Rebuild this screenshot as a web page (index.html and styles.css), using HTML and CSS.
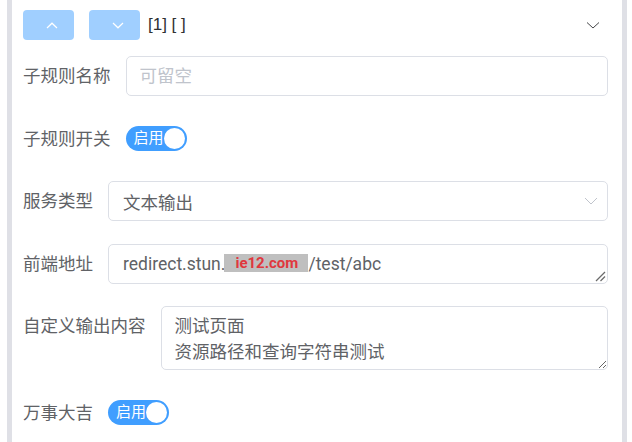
FILE: index.html
```html
<!DOCTYPE html>
<html lang="zh-CN">
<head>
<meta charset="utf-8">
<title>子规则</title>
<link rel="stylesheet" href="styles.css">
</head>
<body>
<div class="panel">
  <div class="header">
    <button class="btn btn-up" type="button">
      <svg width="12" height="7" viewBox="0 0 12 7"><polyline points="1,6 6,1.2 11,6" fill="none" stroke="#fff" stroke-width="1.2"/></svg>
    </button>
    <button class="btn btn-down" type="button">
      <svg width="12" height="7" viewBox="0 0 12 7"><polyline points="1,1 6,5.8 11,1" fill="none" stroke="#fff" stroke-width="1.2"/></svg>
    </button>
    <span class="idx">[1] [ ]</span>
    <svg class="collapse" width="14" height="8" viewBox="0 0 14 8"><polyline points="1,1.5 7,7 13,1.5" fill="none" stroke="#303133" stroke-width="0.9"/></svg>
  </div>
  <div class="form">
    <div class="item">
      <label class="lbl">子规则名称</label>
      <input class="input" type="text" placeholder="可留空">
    </div>
    <div class="item">
      <label class="lbl">子规则开关</label>
      <div class="sw-row"><span class="switch"><span class="sw-text">启用</span><span class="knob"></span></span></div>
    </div>
    <div class="item">
      <label class="lbl">服务类型</label>
      <div class="select"><span class="sel-text">文本输出</span>
        <svg class="sel-arrow" width="14" height="8" viewBox="0 0 14 8"><polyline points="1,1 7,7 13,1" fill="none" stroke="#c0c4cc" stroke-width="1"/></svg>
      </div>
    </div>
    <div class="item">
      <label class="lbl">前端地址</label>
      <div class="area area-one"><span class="url">redirect.stun.</span><span class="mask">ie12.com</span><span class="url">/test/abc</span>
        <svg class="grip" width="11" height="11" viewBox="0 0 11 11"><line x1="1" y1="10" x2="10" y2="1" stroke="#6b6b6b" stroke-width="1.2"/><line x1="5.5" y1="10" x2="10" y2="5.5" stroke="#6b6b6b" stroke-width="1.2"/></svg>
      </div>
    </div>
    <div class="item">
      <label class="lbl">自定义输出内容</label>
      <textarea class="area area-two" rows="2">测试页面
资源路径和查询字符串测试</textarea>
    </div>
    <div class="item">
      <label class="lbl">万事大吉</label>
      <div class="sw-row"><span class="switch"><span class="sw-text">启用</span><span class="knob"></span></span></div>
    </div>
  </div>
</div>
</body>
</html>
```
FILE: styles.css
```css
html, body {
  margin: 0;
  height: 442px;
  overflow: hidden;
  background: #fff;
}
body {
  font-family: Roboto, "Noto Sans CJK SC", sans-serif;
  color: #606266;
}
.panel {
  margin-left: 7px;
  width: 620px;
  min-height: 442px;
  box-sizing: border-box;
  border-left: 5px solid #dfe0e6;
  border-right: 5px solid #dfe0e6;
  padding: 10px 14px 0 11px;
}
.header {
  display: flex;
  align-items: center;
  height: 30px;
}
.btn {
  width: 51px;
  height: 30px;
  border: 0;
  border-radius: 4px;
  background: #a0cfff;
  padding: 0 0 0 6px;
  display: flex;
  align-items: center;
  justify-content: center;
  margin: 0 15px 0 0;
}
.btn-down {
  margin-right: 8px;
}
.idx {
  font-family: "Liberation Sans", "Noto Sans CJK SC", sans-serif;
  font-size: 17px;
  color: #303133;
}
.collapse {
  margin-left: auto;
  margin-right: 8px;
}
.form {
  margin-top: 16px;
  display: flex;
  flex-direction: column;
  gap: 22.5px;
}
.item {
  display: flex;
  align-items: flex-start;
}
.lbl {
  font-size: 17.5px;
  line-height: 40px;
  color: #606266;
  margin-right: 15px;
  white-space: nowrap;
}
.input {
  flex: 1;
  min-width: 0;
  height: 40px;
  box-sizing: border-box;
  border: 1px solid #dcdfe6;
  border-radius: 5px;
  padding: 0 13px;
  font-family: inherit;
  font-size: 17.5px;
  color: #606266;
  outline: none;
  background: #fff;
}
.input::placeholder {
  color: #c0c4cc;
}
.sw-row {
  height: 40px;
  display: flex;
  align-items: center;
}
.switch {
  width: 61px;
  height: 25px;
  box-sizing: border-box;
  border-radius: 12.5px;
  background: #409eff;
  display: flex;
  align-items: center;
  justify-content: space-between;
  padding: 0 2px 0 8px;
}
.sw-text {
  font-size: 15px;
  line-height: 25px;
  color: #fff;
}
.knob {
  width: 21px;
  height: 21px;
  border-radius: 50%;
  background: #fff;
}
.select {
  flex: 1;
  height: 40px;
  box-sizing: border-box;
  border: 1px solid #dcdfe6;
  border-radius: 5px;
  padding: 0 9px 0 14px;
  display: flex;
  align-items: center;
  justify-content: space-between;
  font-size: 17.5px;
  color: #606266;
}
.area {
  flex: 1;
  box-sizing: border-box;
  border: 1px solid #dcdfe6;
  border-radius: 5px;
  padding: 6px 13px;
  font-family: inherit;
  font-size: 17.5px;
  line-height: 26px;
  color: #606266;
  background: #fff;
  outline: none;
  margin: 0;
}
.area-one {
  position: relative;
  height: 40px;
  padding-left: 14px;
  white-space: nowrap;
}
.area-two {
  height: 64px;
  resize: vertical;
  overflow: hidden;
}
.mask {
  display: inline-block;
  vertical-align: middle;
  width: 84px;
  height: 18px;
  box-sizing: border-box;
  padding-left: 11px;
  margin-top: -3px;
  margin-left: -1px;
  background: #bfbfbf;
  color: #e0383e;
  font-weight: 700;
  font-size: 15px;
  line-height: 18px;
}
.grip {
  position: absolute;
  right: 1px;
  bottom: 1px;
}
```
